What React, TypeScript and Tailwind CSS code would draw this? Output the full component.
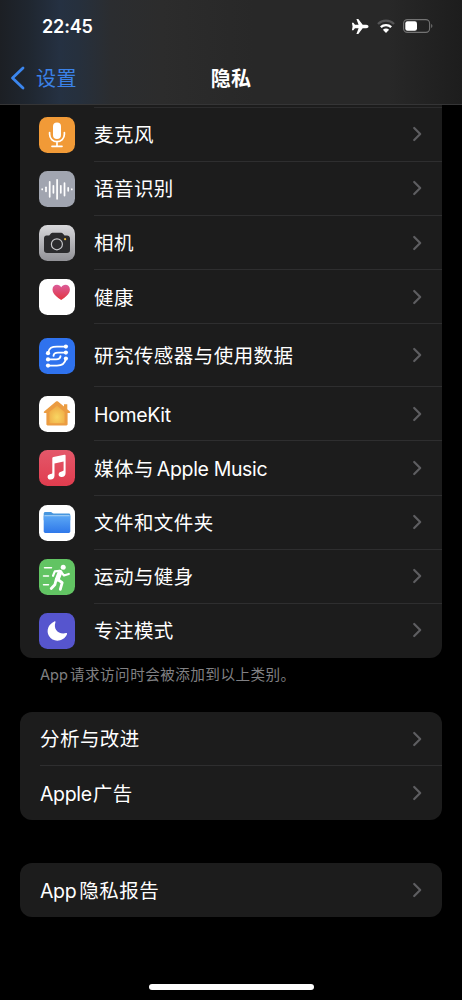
import type { ReactNode } from "react";
import clsx from "clsx";

type Item = { label: ReactNode; id: string; icon?: ReactNode; tall?: boolean };

const privacyItems: Item[] = [
  { id: "mic", label: "麦克风", icon: <MicIcon /> },
  { id: "speech", label: "语音识别", icon: <SpeechIcon /> },
  { id: "camera", label: "相机", icon: <CameraIcon /> },
  { id: "health", label: "健康", icon: <HealthIcon /> },
  { id: "research", label: "研究传感器与使用数据", icon: <ResearchIcon />, tall: true },
  { id: "homekit", label: <Latin>HomeKit</Latin>, icon: <HomeIcon /> },
  {
    id: "music",
    label: (
      <>
        媒体与<Latin className="ml-[3px]">Apple Music</Latin>
      </>
    ),
    icon: <MusicIcon />,
  },
  { id: "files", label: "文件和文件夹", icon: <FilesIcon /> },
  { id: "fitness", label: "运动与健身", icon: <FitnessIcon /> },
  { id: "focus", label: "专注模式", icon: <FocusIcon /> },
];

const analyticsItems: Item[] = [
  { id: "analytics", label: "分析与改进" },
  {
    id: "ads",
    label: (
      <>
        <Latin className="mr-[1px]">Apple</Latin>广告
      </>
    ),
  },
];

const reportItem: Item = {
  id: "report",
  label: (
    <>
      <Latin className="mr-[3px]">App</Latin>隐私报告
    </>
  ),
};

export default function App() {
  return (
    <div className="flex h-[1000px] w-[462px] flex-col overflow-hidden bg-black font-['Inter','Noto_Sans_CJK_SC',sans-serif] text-white">
      <Header />

      <main className="flex flex-1 flex-col px-5">
        <section className="rounded-b-[12px] bg-[#1c1c1c]">
          <div className="ml-[74px] h-[2.7px] border-b border-[#2c2c2d]" />
          {privacyItems.map((item, i) => (
            <Row key={item.id} item={item} last={i === privacyItems.length - 1} />
          ))}
        </section>
        <p className="mt-[5px] h-[24px] pl-5 text-[14.6px] leading-6 tracking-[0.45px] text-[#808083]">
          <span className="mr-[2px] tracking-[0px]">App</span>请求访问时会被添加到以上类别。
        </p>

        <section className="mt-[25px] rounded-[12px] bg-[#1c1c1c]">
          {analyticsItems.map((item, i) => (
            <Row key={item.id} item={item} last={i === analyticsItems.length - 1} />
          ))}
        </section>

        <section className="mt-[43px] rounded-[12px] bg-[#1c1c1c]">
          <Row item={reportItem} last />
        </section>

        <div className="mt-auto mb-[10px] h-[6px] w-[165px] self-center rounded-full bg-white" />
      </main>
    </div>
  );
}

function Header() {
  return (
    <header className="h-[105px] shrink-0 border-b border-[#353536] bg-[linear-gradient(90deg,#1c1f24_0%,#1f262f_6%,#253142_13%,#26303d_17%,#2b2d30_24%,#2c2c2c_35%,#282828_55%,#282828_84%,#1d1d1d_100%)]">
      <div className="flex h-[52px] items-center justify-between pr-[29px] pl-[42px]">
        <span className="text-[18px] font-semibold tracking-[-0.15px]">22:45</span>
        <div className="flex items-center">
          <PlaneIcon />
          <WifiIcon />
          <BatteryIcon />
        </div>
      </div>
      <nav className="grid h-[52px] grid-cols-3 items-center">
        <a className="flex items-center text-[20px] text-[#3b82e8]">
          <svg className="ml-[10px] h-[24px] w-[15px]" viewBox="0 0 15 24" fill="none">
            <path d="M13 2 2.500 12 13 22" stroke="#3b86ee" strokeWidth="2.800" strokeLinecap="round" strokeLinejoin="round" />
          </svg>
          <span className="ml-[11px] pt-[2px] tracking-[0.4px]">设置</span>
        </a>
        <h1 className="pt-[2px] text-center text-[20px] font-semibold tracking-[0.3px]">隐私</h1>
      </nav>
    </header>
  );
}

function Latin({ children, className }: { children: string; className?: string }) {
  return <span className={clsx("tracking-[-0.35px]", className)}>{children}</span>;
}

function Row({ item, last }: { item: Item; last?: boolean }) {
  return (
    <div className={clsx("flex items-center", item.tall ? "h-[63px]" : "h-[54.15px]", item.icon ? "pl-[19px]" : "pl-5")}>
      {item.icon && (
        <svg className="mr-[19px] size-9 shrink-0 rounded-[8.5px]" viewBox="0 0 36 36" fill="none">
          {item.icon}
        </svg>
      )}
      <div
        className={clsx(
          "flex h-full flex-1 items-center justify-between border-b pr-5",
          last ? "border-transparent" : "border-[#2e2e2f]",
        )}
      >
        <span className="pt-[3px] text-[19.5px] tracking-[0.45px] whitespace-nowrap">{item.label}</span>
        <svg className="h-[16px] w-[10px]" viewBox="0 0 10 16" fill="none">
          <path d="m2.200 2 6 6-6 6" stroke="#5e5e61" strokeWidth="2.200" strokeLinecap="round" strokeLinejoin="round" />
        </svg>
      </div>
    </div>
  );
}

// Status bar

function PlaneIcon() {
  return (
    <svg className="h-[18px] w-[18px]" viewBox="0 0 18 18" fill="white">
      <path d="M17.500 9.500c0-1-1-1.700-2.300-1.700h-3.500L7.300 2H5.400l2.200 5.800H4L2.400 5.700H.9L1.600 9.500l-.7 3.800h1.500L4 11.200h3.600L5.400 17h1.900l4.400-5.800h3.500c1.300 0 2.300-.700 2.300-1.700Z" />
    </svg>
  );
}

function WifiIcon() {
  return (
    <svg className="ml-[8px] h-[14px] w-[18px]" viewBox="0 0 18 14" fill="none" strokeWidth="2.300">
      <path d="M1 5C5.400.6 12.600.6 17 5" stroke="#555556" />
      <path d="M3.800 8.200c2.900-2.800 7.500-2.800 10.400 0" stroke="white" />
      <path d="M9 13.900 5.900 10.800c1.700-1.600 4.500-1.600 6.200 0Z" fill="white" />
    </svg>
  );
}

function BatteryIcon() {
  return (
    <svg className="ml-[8px] h-[14px] w-[30px]" viewBox="0 0 30 14" fill="none">
      <rect x=".6" y=".6" width="26" height="12.800" rx="3.800" stroke="#737373" strokeWidth="1.100" />
      <rect x="2.300" y="2.300" width="11.700" height="9.400" rx="2.200" fill="white" />
      <path d="M28.200 5v4c1.600-.6 1.600-3.400 0-4Z" fill="#737373" />
    </svg>
  );
}

// App icons, all drawn on a 36 x 36 canvas

function MicIcon() {
  return (
    <>
      <rect width="36" height="36" fill="#f19a37" />
      <rect x="14" y="5.500" width="8" height="16.500" rx="4" fill="white" />
      <path d="M10.600 15.500v1.800a7.400 7.400 0 0 0 14.800 0v-1.800M18 25v4.300M13 29.300h10" stroke="white" strokeWidth="1.700" strokeLinecap="round" />
    </>
  );
}

const waveBars = [
  [3.2, 0.4],
  [7, 4],
  [10.7, 15],
  [14.4, 7],
  [18.1, 19],
  [21.8, 7],
  [25.5, 12.5],
  [29.2, 3],
  [32.8, 0.4],
];

function SpeechIcon() {
  return (
    <>
      <rect width="36" height="36" fill="#a1a5b0" />
      {waveBars.map(([x, h]) => (
        <path key={x} d={`M${x} ${18.3 - h / 2}v${h}`} stroke="white" strokeWidth="1.700" strokeLinecap="round" />
      ))}
    </>
  );
}

function CameraIcon() {
  return (
    <>
      <defs>
        <linearGradient id="camera" x1="0" y1="0" x2="0" y2="1">
          <stop stopColor="#d8d8db" />
          <stop offset="1" stopColor="#919196" />
        </linearGradient>
      </defs>
      <rect width="36" height="36" fill="url(#camera)" />
      <path
        d="M7.500 10.500h2.700l1.700-2c.4-.5.900-.7 1.500-.7h8.800c.6 0 1.200.2 1.600.7l1.700 2H28c1.700 0 3 1.100 3 2.800v11.900c0 1.700-1.300 2.800-3 2.800H8c-1.700 0-3-1.100-3-2.800V13.300c0-1.500 1-2.800 2.500-2.800Z"
        fill="#2b2b2d"
      />
      <circle cx="17.900" cy="19.300" r="5.500" stroke="#c7c7ca" strokeWidth="1.200" />
      <circle cx="26.100" cy="14.200" r="1.100" fill="#e9b73e" />
    </>
  );
}

function HealthIcon() {
  return (
    <>
      <defs>
        <linearGradient id="heart" x1="0" y1="0" x2="0" y2="1">
          <stop stopColor="#dc5c9a" />
          <stop offset="1" stopColor="#e2353f" />
        </linearGradient>
      </defs>
      <rect width="36" height="36" fill="white" />
      <path
        d="M22.200 20.900c-3.700-2.300-8.700-5.800-8.700-10.400 0-2.700 2-4.700 4.500-4.700 1.800 0 3.300 1 4.200 2.500.9-1.500 2.400-2.500 4.200-2.500 2.500 0 4.500 2 4.500 4.700 0 4.600-5 8.100-8.700 10.400Z"
        fill="url(#heart)"
      />
    </>
  );
}

const researchDots = [
  [26.9, 8.6],
  [26.9, 14.6],
  [26.9, 20.6],
  [9, 15.2],
  [9, 21.4],
  [9, 27.6],
];

function ResearchIcon() {
  return (
    <>
      <rect width="36" height="36" fill="#2f72ee" />
      <path
        d="M26.900 8.600H18c-5 0-8 1-9 6.600M26.900 14.600H19c-3 0-4.300 1-4.500 3.200M9 21.400h8.200c3 0 4.100-1 4.300-3.200M26.900 20.600c-1 5.500-3.900 7-8.900 7H9"
        stroke="white"
        strokeWidth="1.900"
        strokeLinecap="round"
      />
      {researchDots.map(([x, y]) => (
        <circle key={`${x}-${y}`} cx={x} cy={y} r="2.100" fill="white" />
      ))}
    </>
  );
}

function HomeIcon() {
  return (
    <>
      <defs>
        <radialGradient id="home" cx=".5" cy=".65" r=".6">
          <stop stopColor="#f8d662" />
          <stop offset="1" stopColor="#f0ad47" />
        </radialGradient>
      </defs>
      <rect width="36" height="36" fill="white" />
      <path
        d="M17 5.600c.6-.5 1.400-.5 2 0l6 4.900V8.200h3.300v5l2.600 2.200c.7.600.3 1.500-.5 1.500h-1.800v11.300c0 .7-.5 1.200-1.200 1.200H8.600c-.7 0-1.200-.5-1.200-1.200V16.900H5.600c-.8 0-1.200-.9-.5-1.500Z"
        fill="#eb9c42"
      />
      <path d="m18 9.800 7.600 6.200v11.200H10.400V16Z" fill="url(#home)" />
    </>
  );
}

function MusicIcon() {
  return (
    <>
      <defs>
        <linearGradient id="music" x1="0" y1="0" x2="0" y2="1">
          <stop stopColor="#e4586a" />
          <stop offset="1" stopColor="#e03c4e" />
        </linearGradient>
      </defs>
      <rect width="36" height="36" fill="url(#music)" />
      <path
        d="M13.300 8.300c0-.8.400-1.200 1.100-1.400l10.900-2.200c.8-.1 1.300.2 1.300 1v17.200c0 2.500-1.600 3.900-3.900 4-1.900.1-3.100-1-3.100-2.500 0-1.600 1.100-2.600 3-3l1.200-.3c.6-.1.800-.4.800-1v-8.600l-9.100 1.900v12.200c0 2.500-1.500 3.900-3.800 4-1.900.1-3.100-1-3.100-2.600s1.100-2.500 2.900-2.900l1.200-.3c.4-.1.600-.4.600-1Z"
        fill="white"
      />
    </>
  );
}

function FilesIcon() {
  return (
    <>
      <defs>
        <linearGradient id="files" x1="0" y1="0" x2="0" y2="1">
          <stop stopColor="#5ba7f4" />
          <stop offset="1" stopColor="#2f78ea" />
        </linearGradient>
      </defs>
      <rect width="36" height="36" fill="white" />
      <path d="M4.700 8.800c0-1 .7-1.700 1.700-1.700h5.300c1.400 0 1.500 1.500 3 1.500h15c1 0 1.600.7 1.600 1.600v5H4.700Z" fill="#4796de" />
      <path d="M4.700 10.800h26.600v15.500c0 1-.7 1.700-1.700 1.700H6.400c-1 0-1.700-.7-1.700-1.700Z" fill="url(#files)" />
      <path d="M5.400 10.700h25.200" stroke="#c4e1fa" strokeWidth=".8" />
    </>
  );
}

function FitnessIcon() {
  return (
    <>
      <rect width="36" height="36" fill="#62c463" />
      <g stroke="white" strokeLinecap="round" strokeLinejoin="round">
        <path d="M5.500 8.700h7M4.500 17h5M4.500 25.700h5" strokeWidth="1.500" />
        <path d="m21 13.300-2.600 6.700" strokeWidth="4.800" />
        <path d="m20.500 11.800-4.700.5-1.800 4.500M22.500 13.500l2.500 3 4.800-1.500" strokeWidth="2.200" />
        <path d="m18.800 20.500 4.400 3.200-1.900 6.600M17.200 20.500l-1.400 5.300-3.600 3.700" strokeWidth="2.800" />
      </g>
      <circle cx="24.200" cy="8.200" r="2.500" fill="white" />
    </>
  );
}

function FocusIcon() {
  return (
    <>
      <rect width="36" height="36" fill="#5655ce" />
      <path
        d="M15.400 8.400c.7-.3 1.300.3 1 1-2.200 6.300 2.500 12.500 10.700 10.700.7-.2 1.200.4.900 1.100-3.300 7.800-14 8.700-18 1.900-3.100-5.400-.7-12.100 5.400-14.700Z"
        fill="white"
      />
    </>
  );
}
